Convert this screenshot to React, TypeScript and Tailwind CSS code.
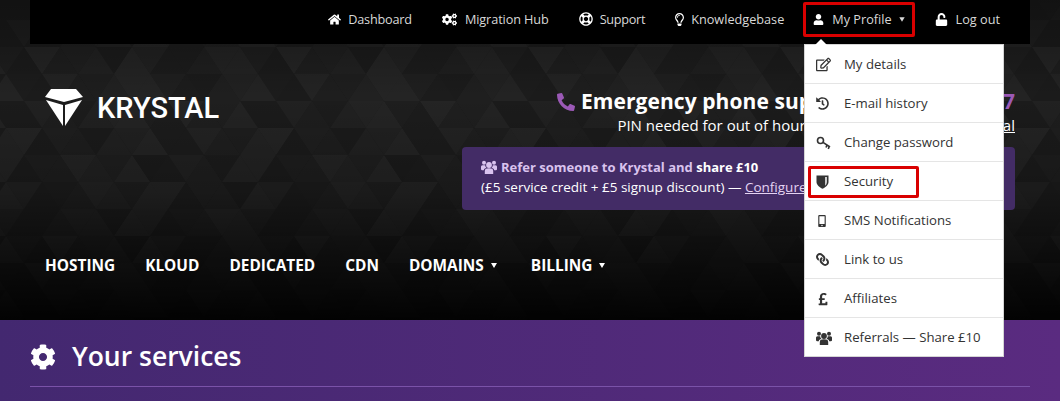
import type { ReactNode } from "react"
import {
  FaCog,
  FaCogs,
  FaHistory,
  FaHome,
  FaLink,
  FaMobileAlt,
  FaPhone,
  FaPoundSign,
  FaRegEdit,
  FaRegLifeRing,
  FaRegLightbulb,
  FaUnlock,
  FaUser,
} from "react-icons/fa"

const font = "font-['Open_Sans','Noto_Sans',sans-serif]"

function Caret({ className = "" }: { className?: string }) {
  return <span className={"inline-block h-0 w-0 border-x-[3.5px] border-t-[5px] border-x-transparent border-t-current " + className} />
}

function UsersIcon({ className = "" }: { className?: string }) {
  return (
    <svg width="16" height="14" viewBox="0 0 16 14" fill="currentColor" className={className}>
      <circle cx="8" cy="5" r="2.9" />
      <circle cx="3" cy="2.8" r="2" />
      <circle cx="13" cy="2.8" r="2" />
      <path d="M3.8 14V11C3.8 9 5 8.3 8 8.3C11 8.3 12.2 9 12.2 11V14Z" />
      <path d="M0 9V6.8C0 5.6 1 5.3 3 5.3H4.2C4.2 6.5 4.8 7.4 5.4 7.8C3.8 8.2 3 9 2.8 10.2H1C.4 10.2 0 9.8 0 9Z" />
      <path d="M16 9V6.8C16 5.6 15 5.3 13 5.3H11.8C11.8 6.5 11.2 7.4 10.6 7.8C12.2 8.2 13 9 13.2 10.2H15C15.6 10.2 16 9.8 16 9Z" />
    </svg>
  )
}

function KeyIcon() {
  return (
    <svg width="15" height="14" viewBox="0 0 15 14" fill="none" stroke="currentColor" strokeWidth="1.6">
      <circle cx="4.5" cy="4.5" r="3" />
      <path d="M7 6.3L14 11M11 9L10 11.5M13.2 10.5L12.3 13" />
    </svg>
  )
}

function ShieldIcon() {
  return (
    <svg width="13" height="14" viewBox="0 0 13 14" fill="currentColor">
      <path d="M.5 .5H12.5V7C12.5 10 9.5 12.3 6.5 13.8C3.5 12.3 .5 10 .5 7Z" />
      <path d="M9 2H11V7C11 8.5 10 10 9 10.8Z" fill="#fff" fillOpacity="0.75" />
    </svg>
  )
}

function TopLink({ icon, label, caret, className = "gap-[8px]" }: { icon: ReactNode; label: string; caret?: boolean; className?: string }) {
  return (
    <a className={"flex items-center text-[12.7px] text-[#d8d8d8] " + className}>
      <span className="flex justify-center text-white">{icon}</span>
      <span>{label}</span>
      {caret && <Caret className="-ml-[1px] scale-90" />}
    </a>
  )
}

const profileMenu: { icon: ReactNode; label: string }[] = [
  { icon: <FaRegEdit size={15} />, label: "My details" },
  { icon: <FaHistory size={13} />, label: "E-mail history" },
  { icon: <KeyIcon />, label: "Change password" },
  { icon: <ShieldIcon />, label: "Security" },
  { icon: <FaMobileAlt size={12} />, label: "SMS Notifications" },
  { icon: <FaLink size={13} className="-scale-x-100" />, label: "Link to us" },
  { icon: <FaPoundSign size={14} />, label: "Affiliates" },
  { icon: <UsersIcon />, label: "Referrals — Share £10" },
]

// triangle mesh behind the header, shade picked per triangle
function TriangleMesh() {
  const w = 36
  const h = 27
  const tris: { points: string; opacity: number }[] = []
  for (let row = 0; row < 13; row++) {
    for (let col = -1; col < 32; col++) {
      const x = col * w + 6 + (row % 2 ? 18 : 0)
      const y = row * h - 7
      const up = ((row * 7 + col * 13) * 2654435761) % 7
      const down = ((row * 11 + col * 5 + 3) * 2654435761) % 7
      tris.push({ points: `${x},${y + h} ${x + w},${y + h} ${x + w / 2},${y}`, opacity: up * 0.007 })
      tris.push({ points: `${x + w / 2},${y} ${x + (w * 3) / 2},${y} ${x + w},${y + h}`, opacity: down * 0.007 })
    }
  }
  return (
    <svg className="absolute inset-0 h-full w-full" aria-hidden="true">
      <defs>
        <linearGradient id="fade" x1="0" y1="0" x2="0" y2="1">
          <stop offset="0" stopColor="#000" stopOpacity="0.35" />
          <stop offset="0.3" stopColor="#000" stopOpacity="0" />
          <stop offset="0.6" stopColor="#000" stopOpacity="0.2" />
          <stop offset="1" stopColor="#000" stopOpacity="0.92" />
        </linearGradient>
      </defs>
      {tris.map((t, i) => (
        <polygon key={i} points={t.points} fill="#fff" fillOpacity={t.opacity} />
      ))}
      <rect width="100%" height="100%" fill="url(#fade)" />
    </svg>
  )
}

function Logo() {
  return (
    <div className="flex items-center gap-[14px]">
      <svg width="38" height="38" viewBox="0 0 38 38" fill="#fff">
        <path d="M6 0H31L38 8L19 13L0 8Z" />
        <path d="M1 11L18 16V37Z" />
        <path d="M37 11L20 16V37Z" />
      </svg>
      <span className="font-['Roboto',sans-serif] text-[29px] leading-none font-medium text-white">KRYSTAL</span>
    </div>
  )
}

export default function App() {
  return (
    <div className={"h-[401px] w-[1060px] overflow-hidden bg-black " + font}>
      <header className="relative h-[320px] bg-[#1b1b1b]">
        <TriangleMesh />

        <div className="relative">
          <nav className="mx-[30px] flex h-[44px] items-center justify-end gap-[30px] bg-black pr-[30px] pb-[5px]">
            <TopLink icon={<FaHome size={13} />} label="Dashboard" className="gap-[7px] tracking-[-0.2px]" />
            <TopLink icon={<FaCogs size={15} />} label="Migration Hub" className="gap-[8px] tracking-[-0.1px]" />
            <TopLink icon={<FaRegLifeRing size={14} />} label="Support" className="gap-[7px] tracking-[-0.3px]" />
            <TopLink icon={<FaRegLightbulb size={13} className="-mx-[2px]" />} label="Knowledgebase" className="-mr-[1px] gap-[7px]" />
            <TopLink icon={<FaUser size={11} />} label="My Profile" caret />
            <TopLink icon={<FaUnlock size={13} />} label="Log out" />
          </nav>

          <div className="flex items-start justify-between px-[45px] pt-[45px]">
            <Logo />
            <div className="flex flex-col items-end">
              <div className="flex h-[25px] items-center gap-[6px] text-[21px] font-bold tracking-[0.07px] text-white">
                <FaPhone size={18} className="-scale-x-100 text-[#9b59b6]" />
                <span>
                  Emergency phone support: available <span className="text-[#9b59b6]">24/7</span>
                </span>
              </div>
              <p className="-mt-[1px] text-[15px] leading-[24px] text-white">
                PIN needed for out of hours support — Set in your <u>portal</u>
              </p>
              <div className="mt-[10px] h-[63px] w-[553px] rounded-[4px] bg-[#432c66] px-[19px] pt-[10px] text-[13.5px] leading-[20px] text-white">
                <p className="flex items-center gap-[4px] text-[13px] font-bold text-[#d9c3ee]">
                  <UsersIcon />
                  <span>
                    Refer someone to Krystal and <span className="text-white">share £10</span>
                  </span>
                </p>
                <p>
                  (£5 service credit + £5 signup discount) — <u className="text-[#e4d3f3]">Configure referrals</u>
                </p>
              </div>
            </div>
          </div>

          <ul className="mt-[44px] flex items-center gap-[30px] pl-[45px] text-[15.4px] font-bold text-white uppercase">
            <li>Hosting</li>
            <li>Kloud</li>
            <li>Dedicated</li>
            <li>CDN</li>
            <li className="flex items-center gap-[7px]">
              Domains <Caret />
            </li>
            <li className="ml-[4px] flex items-center gap-[7px]">
              Billing <Caret />
            </li>
          </ul>
        </div>

        <div className="absolute top-[2px] left-[803px] h-[35px] w-[112px] rounded-[2px] border-[3px] border-[#d90000]" />

        <div className="absolute top-[44px] left-[804px] z-10 w-[200px] border border-[#d5d5d5] bg-white text-[13.2px] text-[#333]">
          <span className="absolute -top-[6px] left-[10px] h-0 w-0 border-x-[6px] border-b-[6px] border-x-transparent border-b-white" />
          {profileMenu.map((item) => (
            <div key={item.label} className="flex h-[39px] items-center border-b border-[#e5e5e5] pt-[1px] pl-[11px] last:h-[38px] last:border-b-0">
              <span className="flex w-[28px] shrink-0 items-center">{item.icon}</span>
              <span>{item.label}</span>
            </div>
          ))}
        </div>

        <div className="absolute top-[166px] left-[808px] z-20 h-[32px] w-[111px] rounded-[2px] border-[3px] border-[#d90000]" />
      </header>

      <section className="h-[81px] bg-gradient-to-r from-[#432870] to-[#5a2b80] px-[30px]">
        <div className="flex h-[67px] items-center gap-[16px] border-b border-[#7a52a8] pt-[7px] text-[26.5px] font-semibold text-white">
          <FaCog size={26} />
          <h1>Your services</h1>
        </div>
      </section>
    </div>
  )
}
